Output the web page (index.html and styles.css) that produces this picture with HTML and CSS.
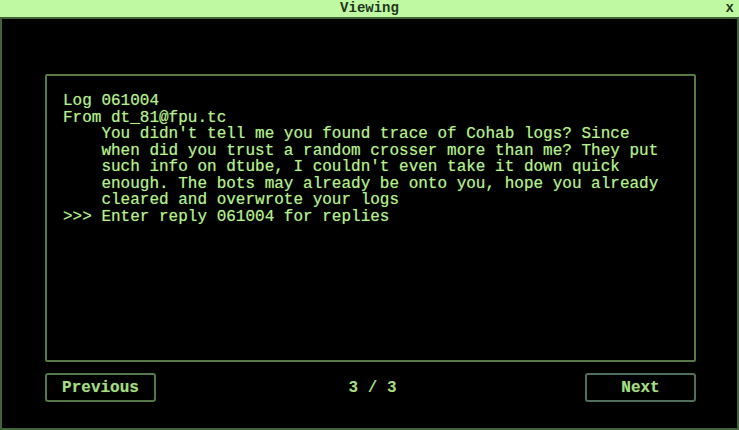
FILE: index.html
```html
<!DOCTYPE html>
<html>
<head>
<meta charset="utf-8">
<link rel="stylesheet" href="styles.css">
</head>
<body>
<div class="window">
  <div class="titlebar">
    <span></span>
    <span class="title">Viewing</span>
    <span class="close">x</span>
  </div>
  <div class="content">
    <div class="panel">
<pre class="log">Log 061004
From dt_81@fpu.tc
    You didn't tell me you found trace of Cohab logs? Since
    when did you trust a random crosser more than me? They put
    such info on dtube, I couldn't even take it down quick
    enough. The bots may already be onto you, hope you already
    cleared and overwrote your logs
&gt;&gt;&gt; Enter reply 061004 for replies</pre>
    </div>
    <div class="footer">
      <button class="btn">Previous</button>
      <span class="pager">3 / 3</span>
      <button class="btn btn-next">Next</button>
    </div>
  </div>
</div>
</body>
</html>
```
FILE: styles.css
```css
html, body {
  margin: 0;
  padding: 0;
  background: #000;
}
* {
  box-sizing: border-box;
}
.window {
  width: 739px;
  height: 430px;
  display: flex;
  flex-direction: column;
  font-family: "Liberation Mono", "DejaVu Sans Mono", monospace;
}
.titlebar {
  height: 17px;
  flex: none;
  background: #bffaa3;
  display: grid;
  grid-template-columns: 1fr auto 1fr;
  align-items: center;
  font-size: 14px;
  line-height: 17px;
  color: #24351d;
}
.title {
  font-weight: bold;
}
.close {
  justify-self: end;
  padding-right: 5px;
  font-weight: bold;
}
.content {
  flex: 1;
  background: #000;
  border: 2px solid #43613a;
  padding: 55px 41px 0 43px;
  display: flex;
  flex-direction: column;
}
.panel {
  height: 288px;
  flex: none;
  border: 2px solid #587a49;
  border-radius: 2px;
  padding: 17px 16px;
}
.log {
  margin: 0;
  font-family: "Liberation Mono", "DejaVu Sans Mono", monospace;
  font-size: 16px;
  line-height: 16.5px;
  color: #b5ee8e;
  text-shadow: 0 0 1px rgba(150, 230, 110, 0.6);
}
.footer {
  margin-top: 11px;
  display: flex;
  align-items: center;
  justify-content: space-between;
}
.btn {
  width: 111px;
  height: 29px;
  background: #000;
  border: 2px solid #55774a;
  border-radius: 3px;
  color: #a3dc82;
  font-family: "Liberation Mono", "DejaVu Sans Mono", monospace;
  font-size: 16px;
  font-weight: bold;
  padding: 0;
  text-shadow: 0 0 1px rgba(150, 230, 110, 0.5);
}
.btn-next {
  border-color: #4f6f5c;
}
.pager {
  color: #a3dc82;
  font-size: 16px;
  font-weight: bold;
  margin-left: 4px;
}
```
